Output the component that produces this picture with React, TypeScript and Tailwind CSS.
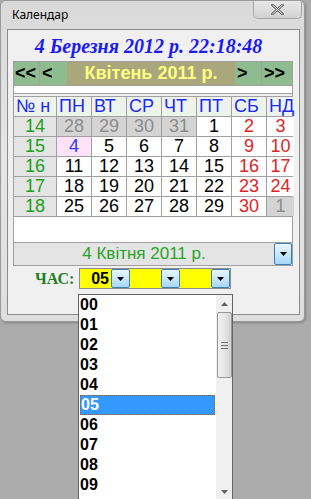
import React from "react";

const days = ["ПН", "ВТ", "СР", "ЧТ", "ПТ", "СБ", "НД"];

type Cell = { d: number; kind: "prev" | "cur" | "next" | "today" };

const weeks: { n: number; cells: Cell[] }[] = [
  {
    n: 14,
    cells: [
      { d: 28, kind: "prev" },
      { d: 29, kind: "prev" },
      { d: 30, kind: "prev" },
      { d: 31, kind: "prev" },
      { d: 1, kind: "cur" },
      { d: 2, kind: "cur" },
      { d: 3, kind: "cur" },
    ],
  },
  {
    n: 15,
    cells: [4, 5, 6, 7, 8, 9, 10].map((d) => ({
      d,
      kind: d === 4 ? "today" : "cur",
    })) as Cell[],
  },
  { n: 16, cells: [11, 12, 13, 14, 15, 16, 17].map((d) => ({ d, kind: "cur" })) as Cell[] },
  { n: 17, cells: [18, 19, 20, 21, 22, 23, 24].map((d) => ({ d, kind: "cur" })) as Cell[] },
  {
    n: 18,
    cells: [
      { d: 25, kind: "cur" },
      { d: 26, kind: "cur" },
      { d: 27, kind: "cur" },
      { d: 28, kind: "cur" },
      { d: 29, kind: "cur" },
      { d: 30, kind: "cur" },
      { d: 1, kind: "next" },
    ],
  },
];

const hours = ["00", "01", "02", "03", "04", "05", "06", "07", "08", "09"];

function DropButton({ className = "" }: { className?: string }) {
  return (
    <div
      className={
        "flex items-center justify-center border border-[#3c7fb1] bg-gradient-to-b from-[#eaf6fd] to-[#a7d8f8] rounded-[2px] " +
        className
      }>
      <svg width="7" height="4" viewBox="0 0 7 4">
        <path d="M0 0h7L3.5 4z" fill="#000" />
      </svg>
    </div>
  );
}

function cellClass(c: Cell, col: number) {
  if (c.kind === "prev" || c.kind === "next") return "bg-[#d4d4d4] text-[#8c8c8c]";
  if (c.kind === "today") return "bg-[#ffe1f8] text-[#2a3aff]";
  if (col >= 5) return "bg-white text-[#e02424]";
  return "bg-white text-black";
}

export default function App() {
  return (
    <div
      className="relative w-[311px] h-[499px] overflow-hidden bg-[#ababab]"
      style={{ fontFamily: '"Liberation Sans", Arial, sans-serif' }}>
      {/* window */}
      <div className="w-[305px] h-[322px] rounded-[6px] border border-[#9a9a9a] bg-gradient-to-b from-[#d9d9d9] via-[#e6e6e6] to-[#dedede] shadow-[1px_1px_2px_rgba(0,0,0,0.25)]">
        <div className="flex h-[28px] items-start justify-between">
          <span
            className="pl-[11px] pt-[6px] text-[12px] leading-[16px] text-black"
            style={{ fontFamily: '"Noto Sans", "DejaVu Sans", sans-serif' }}>
            Календар
          </span>
          <div className="mr-[2px] flex h-[18px] w-[49px] items-center justify-center rounded-b-[5px] border border-t-0 border-[#a8a8a8] bg-gradient-to-b from-[#e8e8e8] to-[#d2d2d2]">
            <svg width="13" height="11" viewBox="0 0 13 11">
              <path
                d="M1.5 1 L11.5 10 M11.5 1 L1.5 10"
                stroke="#6a6a6a"
                strokeWidth="2.6"
                strokeLinecap="square"
              />
              <path
                d="M1.5 1 L11.5 10 M11.5 1 L1.5 10"
                stroke="#f4f4f4"
                strokeWidth="0.9"
              />
            </svg>
          </div>
        </div>

        {/* client */}
        <div className="ml-[6px] w-[293px] h-[286px] border border-[#8c8c8c] bg-[#f0f0f0]">
          <div
            className="flex h-[31px] items-center justify-center pr-[10px] text-[20px] font-bold italic text-[#1c1cf0]"
            style={{ fontFamily: '"Liberation Serif", "Times New Roman", serif' }}>
            4 Березня 2012 р. 22:18:48
          </div>

          <div className="ml-[5px] w-[280px] border border-[#a0a0a0]">
            {/* nav */}
            <div className="flex h-[23px] font-bold text-[18px] leading-[23px]">
              <div className="w-[26px] bg-[#8fbc8f] pl-[1px] text-black border-r border-[#a0a0a0]">&lt;&lt;</div>
              <div className="w-[27px] bg-[#8fbc8f] pl-[2px] text-black">&lt;</div>
              <div className="w-[168px] bg-[#a9a77b] text-center text-[#ffff80]">
                Квітень 2011 р.
              </div>
              <div className="w-[27px] bg-[#8fbc8f] pl-[2px] text-black border-r border-[#a0a0a0]">&gt;</div>
              <div className="flex-1 bg-[#8fbc8f] pl-[2px] text-black">&gt;&gt;</div>
            </div>
            <div className="h-[9px] bg-white border-t border-b border-[#a0a0a0]" />

            {/* grid */}
            <div className="grid grid-cols-[42px_repeat(6,34px)_1fr] gap-px bg-[#a0a0a0] border-t border-[#a0a0a0] mt-[2px] text-[18px] leading-[19px]">
              <div className="bg-[#eef3ee] pl-[2px] text-[#1c2cf0]">№ н</div>
              {days.map((d) => (
                <div key={d} className="bg-[#eef3ee] pl-[2px] text-[#1c2cf0]">
                  {d}
                </div>
              ))}
              {weeks.map((w) => (
                <React.Fragment key={w.n}>
                  <div className="bg-[#e4e4e4] text-center text-[#20a020]">{w.n}</div>
                  {w.cells.map((c, i) => (
                    <div key={i} className={"text-center " + cellClass(c, i)}>
                      {c.d}
                    </div>
                  ))}
                </React.Fragment>
              ))}
            </div>
            <div className="h-[27px] bg-white border-t border-b border-[#a0a0a0]" />
            <div className="flex h-[22px] bg-[#e4e4e4]">
              <div className="flex-1 text-center text-[17px] leading-[22px] text-[#28a428]">
                4 Квітня 2011 р.
              </div>
              <DropButton className="w-[18px] h-[22px]" />
            </div>
          </div>

          {/* time row */}
          <div className="mt-[2px] flex h-[21px] items-center">
            <span
              className="ml-[27px] w-[44px] text-[16px] font-bold text-[#1f7f1f]"
              style={{ fontFamily: '"Liberation Serif", "Times New Roman", serif' }}>
              ЧАС:
            </span>
            <div className="flex h-[21px] border border-[#8c8c8c]">
              <div className="w-[31px] bg-[#ffff00] pr-[2px] text-right text-[16px] font-bold leading-[19px] text-black">
                05
              </div>
              <DropButton className="w-[19px] h-[19px]" />
              <div className="w-[31px] bg-[#ffff00]" />
              <DropButton className="w-[19px] h-[19px]" />
              <div className="w-[31px] bg-[#ffff00]" />
              <DropButton className="w-[19px] h-[19px]" />
            </div>
          </div>
        </div>
      </div>

      {/* open dropdown list */}
      <div className="absolute left-[78px] top-[294px] flex w-[155px] h-[210px] border border-[#646464] bg-white">
        <div className="flex-1">
          {hours.map((h) => (
            <div
              key={h}
              className={
                "h-[20px] pl-[1px] text-[16px] font-bold leading-[20px] " +
                (h === "05"
                  ? "bg-[#3399ff] text-white outline outline-1 outline-dotted outline-[#b05a00] -outline-offset-1 mx-[1px]"
                  : "text-black")
              }>
              {h}
            </div>
          ))}
        </div>
        <div className="flex w-[16px] flex-col items-center bg-[#f0f0f0]">
          <div className="flex h-[17px] items-center justify-center">
            <svg width="7" height="4" viewBox="0 0 7 4">
              <path d="M3.5 0L7 4H0z" fill="#606060" />
            </svg>
          </div>
          <div className="flex h-[66px] w-[15px] flex-col items-center justify-center gap-[2px] rounded-[2px] border border-[#979797] bg-gradient-to-r from-[#f1f1f1] via-[#e6e6e6] to-[#d2d2d2]">
            <div className="h-px w-[7px] bg-[#707070]" />
            <div className="h-px w-[7px] bg-[#707070]" />
            <div className="h-px w-[7px] bg-[#707070]" />
          </div>
          <div className="flex-1" />
          <div className="flex h-[22px] items-center justify-center">
            <svg width="7" height="4" viewBox="0 0 7 4">
              <path d="M0 0h7L3.5 4z" fill="#606060" />
            </svg>
          </div>
        </div>
      </div>
    </div>
  );
}
